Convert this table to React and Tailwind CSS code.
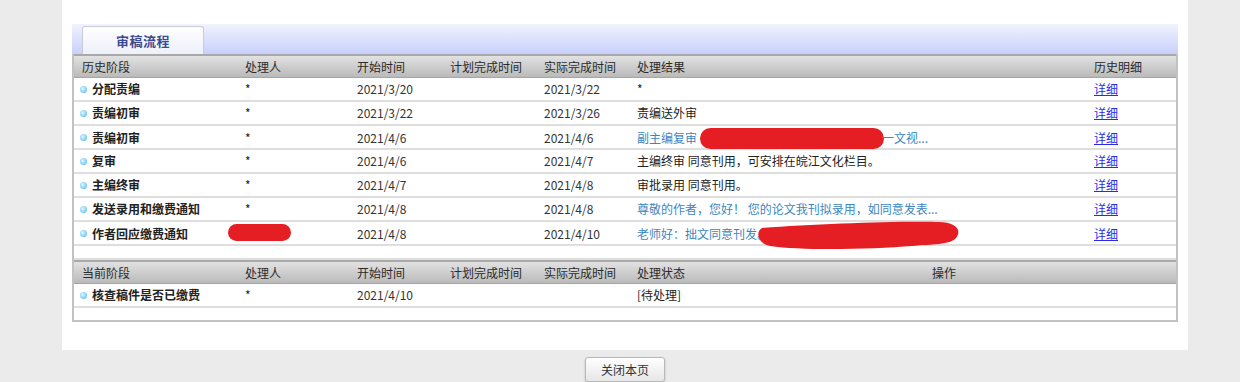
import React from "react";

const font = { fontFamily: '"Noto Sans CJK SC", "Noto Sans", sans-serif' };

const histCols = "grid-cols-[163px_112px_93px_94px_93px_457px_1fr]";
const curCols = "grid-cols-[163px_112px_93px_94px_93px_295px_1fr]";

const historyRows = [
  { stage: "分配责编", who: "*", start: "2021/3/20", done: "2021/3/22", result: "*" },
  { stage: "责编初审", who: "*", start: "2021/3/22", done: "2021/3/26", result: "责编送外审" },
  { stage: "责编初审", who: "*", start: "2021/4/6", done: "2021/4/6", result: "redacted-1", blue: true },
  { stage: "复审", who: "*", start: "2021/4/6", done: "2021/4/7", result: "主编终审 同意刊用，可安排在皖江文化栏目。" },
  { stage: "主编终审", who: "*", start: "2021/4/7", done: "2021/4/8", result: "审批录用 同意刊用。" },
  { stage: "发送录用和缴费通知", who: "*", start: "2021/4/8", done: "2021/4/8", result: "尊敬的作者，您好！ 您的论文我刊拟录用，如同意发表...", blue: true },
  { stage: "作者回应缴费通知", who: "redacted", start: "2021/4/8", done: "2021/4/10", result: "redacted-2", blue: true },
];

const Bullet = () => (
  <span className="inline-block w-[7px] h-[7px] rounded-full bg-[radial-gradient(circle_at_40%_40%,#e4f7ff_0%,#86d2f4_55%,#4fb4e6_100%)] mr-[5px] -ml-[2px] shrink-0" />
);

const HeaderRow = ({ cols, labels }) => (
  <div className={`grid ${cols} pl-[8px] h-[24px] items-center border-t-2 border-[#a9a9a9] border-b border-b-[#a5a5a5] bg-gradient-to-b from-[#e2e2e2] to-[#bababa] text-[12px] text-[#2a2a2a]`}>
    {labels.map((l, i) => (
      <div key={i} className="whitespace-nowrap">{l}</div>
    ))}
  </div>
);

const ResultCell = ({ row }) => {
  if (row.result === "redacted-1") {
    return (
      <div className="whitespace-nowrap text-[#3b86c1] flex items-center">
        副主编复审
        <span className="inline-block w-[184px] h-[21px] rounded-full bg-[#e41e22] ml-[3px] -mr-[2px] mt-[2px]" />
        一文视...
      </div>
    );
  }
  if (row.result === "redacted-2") {
    return (
      <div className="relative whitespace-nowrap text-[#3b86c1] h-full flex items-center">
        老师好：拙文同意刊发。
        <svg className="absolute left-[119px] top-[-3px]" width="206" height="32" viewBox="0 0 206 32">
          <path
            d="M6 9 C 60 5, 140 2, 180 3 C 198 2, 207 10, 200 19 C 194 26, 176 25, 156 27 C 118 30, 48 32, 14 27 C 2 25, -1 13, 6 9 Z"
            fill="#e41e22"
          />
        </svg>
      </div>
    );
  }
  return (
    <div className={`whitespace-nowrap ${row.blue ? "text-[#3b86c1]" : ""}`}>{row.result}</div>
  );
};

const App = () => {
  return (
    <div className="w-full h-[382px] bg-[#ebebeb] overflow-hidden" style={font}>
      <div className="ml-[62px] w-[1126px]">
        {/* white panel */}
        <div className="bg-white h-[350px] pt-[24px] px-[10px]">
          {/* tab strip */}
          <div className="h-[30px] bg-gradient-to-b from-[#f1f3fe] to-[#c8d0fb] flex items-end pl-[10px]">
            <div className="w-[122px] h-[28px] rounded-t-[3px] border border-b-0 border-[#c9cbd8] bg-gradient-to-b from-[#ffffff] to-[#eef0fa] flex items-center justify-center text-[13px] font-bold text-[#3a4a92] tracking-[0.5px]">
              审稿流程
            </div>
          </div>

          {/* table */}
          <div className="border-x-2 border-b-2 border-[#c2c2c2]">
            <HeaderRow
              cols={histCols}
              labels={["历史阶段", "处理人", "开始时间", "计划完成时间", "实际完成时间", "处理结果", "历史明细"]}
            />
            {historyRows.map((row, i) => (
              <div
                key={i}
                className={`grid ${histCols} pl-[8px] h-[24px] items-center border-b-2 border-[#dedede] text-[12px] text-[#222]`}
              >
                <div className="flex items-center font-bold whitespace-nowrap">
                  <Bullet />
                  {row.stage}
                </div>
                <div>
                  {row.who === "redacted" ? (
                    <span className="inline-block w-[63px] h-[17px] rounded-full bg-[#e41e22] -ml-[17px] mt-[2px]" />
                  ) : (
                    row.who
                  )}
                </div>
                <div className="text-[#333]">{row.start}</div>
                <div />
                <div className="text-[#333]">{row.done}</div>
                <ResultCell row={row} />
                <div>
                  <a href="#" className="text-[#2b2bef] underline">详细</a>
                </div>
              </div>
            ))}
            <div className="h-[14px] border-b-2 border-[#dedede]" />

            <HeaderRow
              cols={curCols}
              labels={["当前阶段", "处理人", "开始时间", "计划完成时间", "实际完成时间", "处理状态", "操作"]}
            />
            <div className={`grid ${curCols} pl-[8px] h-[24px] items-center border-b-2 border-[#dedede] text-[12px] text-[#222]`}>
              <div className="flex items-center font-bold whitespace-nowrap">
                <Bullet />
                核查稿件是否已缴费
              </div>
              <div>*</div>
              <div className="text-[#333]">2021/4/10</div>
              <div />
              <div />
              <div>[待处理]</div>
              <div />
            </div>
            <div className="h-[12px]" />
          </div>
        </div>

        {/* bottom bar */}
        <div className="flex justify-center pt-[7px]">
          <button className="w-[80px] h-[25px] rounded-[3px] border border-[#b9b9b9] bg-gradient-to-b from-[#ffffff] to-[#e6e6e6] shadow-[0_1px_2px_rgba(0,0,0,0.25)] text-[12px] text-[#333]">
            关闭本页
          </button>
        </div>
      </div>
    </div>
  );
};

export default App;
